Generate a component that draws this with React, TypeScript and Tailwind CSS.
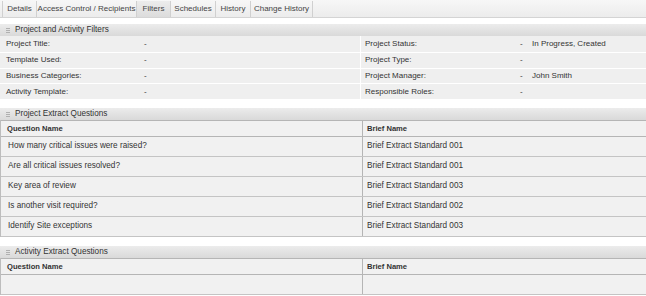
const TABS: [string, string][] = [
  ["Details", "w-[34px]"],
  ["Access Control / Recipients", "w-[100px]"],
  ["Filters", "w-[34px]"],
  ["Schedules", "w-[45px]"],
  ["History", "w-[35px]"],
  ["Change History", "w-[63px]"],
];

const FILTERS: [string, string, string, string][] = [
  ["Project Title:", "-", "Project Status:", "In Progress, Created"],
  ["Template Used:", "-", "Project Type:", ""],
  ["Business Categories:", "-", "Project Manager:", "John Smith"],
  ["Activity Template:", "-", "Responsible Roles:", ""],
];

const QUESTIONS: [string, string][] = [
  ["How many critical issues were raised?", "Brief Extract Standard 001"],
  ["Are all critical issues resolved?", "Brief Extract Standard 001"],
  ["Key area of review", "Brief Extract Standard 003"],
  ["Is another visit required?", "Brief Extract Standard 002"],
  ["Identify Site exceptions", "Brief Extract Standard 003"],
];

function SectionHeader({ title }: { title: string }) {
  return (
    <div className="flex h-[12px] items-center gap-[5px] bg-gradient-to-b from-[#ececec] to-[#d9d9d9] pl-[6px] text-[8.2px] text-[#333]">
      <span className="flex flex-col gap-[1px]">
        <span className="block h-[1px] w-[4px] bg-[#b0b0b0]" />
        <span className="block h-[1px] w-[4px] bg-[#b0b0b0]" />
        <span className="block h-[1px] w-[4px] bg-[#b0b0b0]" />
      </span>
      <span>{title}</span>
    </div>
  );
}

function QuestionTable({ rows }: { rows: [string, string][] }) {
  return (
    <div className="border-l border-[#bdbdbd] bg-[#f1f1f1] text-[8.2px] text-[#333]">
      <div className="grid h-[17px] grid-cols-[362px_1fr] border-b border-t border-[#b5b5b5] text-[7.6px] font-bold">
        <div className="flex items-center border-r border-[#b5b5b5] pl-[6px]">Question Name</div>
        <div className="flex items-center pl-[4px]">Brief Name</div>
      </div>
      {rows.length === 0 ? (
        <div className="grid h-[20px] grid-cols-[362px_1fr] border-b border-[#c4c4c4]">
          <div className="border-r border-[#b5b5b5]" />
          <div />
        </div>
      ) : (
        rows.map(([q, b]) => (
          <div key={q} className="grid h-[20px] grid-cols-[362px_1fr] border-b border-[#c4c4c4]">
            <div className="flex items-center border-r border-[#b5b5b5] pl-[7px]">{q}</div>
            <div className="flex items-center pl-[4px]">{b}</div>
          </div>
        ))
      )}
    </div>
  );
}

export default function App() {
  return (
    <div className="h-[296px] w-[646px] overflow-hidden bg-white font-['Liberation_Sans',Arial,sans-serif]">
      <div className="flex h-[18px] items-stretch border-b border-[#d4d4d4] bg-gradient-to-b from-[#f7f7f7] to-[#ececec] pl-[2px] pt-[1px] text-[8px] text-[#444]">
        {TABS.map(([tab, w]) => (
          <div
            key={tab}
            className={`flex items-center justify-center border-l border-r-0 border-[#d0d0d0] last:border-r ${w} ${
              tab === "Filters" ? "bg-gradient-to-b from-[#ececec] to-[#dcdcdc]" : ""
            }`}
          >
            {tab}
          </div>
        ))}
      </div>

      <div className="mt-[6px]">
        <SectionHeader title="Project and Activity Filters" />
        <div className="bg-[#efefef] text-[8px] text-[#333]">
          {FILTERS.map(([l, lv, r, rv]) => (
            <div key={l} className="grid h-[15.75px] grid-cols-[361px_1fr] border-t border-white first:border-t-0">
              <div className="grid grid-cols-[138px_1fr] items-center border-r border-white pl-[6px]">
                <span>{l}</span>
                <span>{lv}</span>
              </div>
              <div className="grid grid-cols-[155px_12px_1fr] items-center pl-[4px]">
                <span>{r}</span>
                <span>-</span>
                <span>{rv}</span>
              </div>
            </div>
          ))}
        </div>
      </div>

      <div className="mt-[9px]">
        <SectionHeader title="Project Extract Questions" />
        <QuestionTable rows={QUESTIONS} />
      </div>

      <div className="mt-[9px]">
        <SectionHeader title="Activity Extract Questions" />
        <QuestionTable rows={[]} />
      </div>
    </div>
  );
}
